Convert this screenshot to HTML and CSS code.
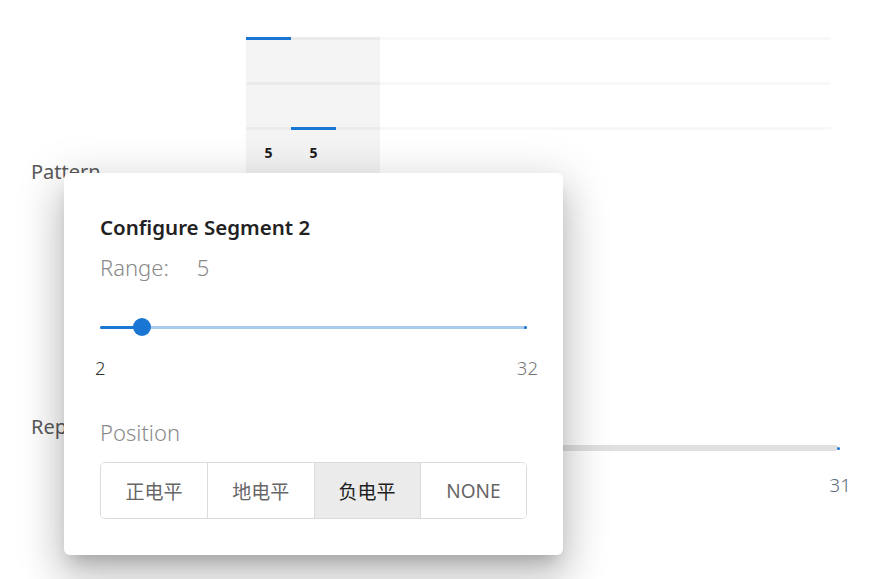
FILE: index.html
```html
<!DOCTYPE html>
<html lang="en">
<head>
<meta charset="utf-8">
<title>Configure Segment</title>
<link rel="stylesheet" href="styles.css">
</head>
<body>
<div class="page">
  <section class="pattern">
    <div class="row-label">Pattern</div>
    <div class="chart">
      <div class="track"><div class="seg" style="margin-left:0px"></div></div>
      <div class="track"></div>
      <div class="track"><div class="seg" style="margin-left:45px"></div></div>
      <div class="values"><span>5</span><span>5</span></div>
    </div>
  </section>
  <section class="repeat">
    <div class="row-label">Repeat</div>
    <div class="repeat-slider">
      <div class="bg-track"><span class="bg-dot"></span></div>
      <div class="bg-max">31</div>
    </div>
  </section>
</div>

<div class="dialog">
  <h2 class="title">Configure Segment 2</h2>
  <div class="range">Range:<span class="range-val">5</span></div>
  <div class="slider">
    <div class="slider-rail">
      <div class="slider-fill"></div>
      <div class="slider-thumb"></div>
      <span class="slider-end"></span>
    </div>
    <div class="slider-labels"><span class="min">2</span><span class="max">32</span></div>
  </div>
  <div class="section-label">Position</div>
  <div class="btn-group">
    <button class="btn">正电平</button>
    <button class="btn">地电平</button>
    <button class="btn active">负电平</button>
    <button class="btn">NONE</button>
  </div>
</div>
</body>
</html>
```

FILE: styles.css
```css
html, body {
  margin: 0;
  padding: 0;
  background: #ffffff;
}
body {
  width: 883px;
  height: 579px;
  overflow: hidden;
  position: relative;
  font-family: "Noto Sans", "Noto Sans CJK SC", sans-serif;
  color: #222;
}
.page {
  padding-top: 37px;
}
.pattern {
  display: grid;
  grid-template-columns: 246px 585px;
}
.row-label {
  padding-left: 31px;
  font-size: 20px;
  color: #5a5a5a;
  align-self: end;
  line-height: 24px;
}
.pattern .row-label {
  margin-bottom: -7px;
}
.chart {
  background: linear-gradient(to right, #f4f4f4 0, #f4f4f4 134px, transparent 134px);
  height: 140px;
}
.track {
  height: 3px;
  margin-bottom: 42px;
  background: linear-gradient(to right, #ebebeb 0, #ebebeb 134px, #f8f8f8 134px);
  display: flex;
}
.seg {
  width: 45px;
  height: 3px;
  background: #1976d2;
}
.values {
  display: flex;
  margin-top: -28px;
}
.values span {
  width: 45px;
  text-align: center;
  font-size: 14px;
  font-weight: 700;
  color: #1a1a1a;
  line-height: 18px;
}
.repeat {
  margin-top: 238px;
  display: grid;
  grid-template-columns: 246px 1fr;
}
.repeat .row-label {
  align-self: start;
}
.repeat-slider {
  padding-top: 30px;
  width: 600px;
  margin-left: -8px;
}
.bg-track {
  height: 6px;
  background: #e0e0e0;
  border-radius: 3px;
  position: relative;
}
.bg-dot {
  position: absolute;
  right: -2px;
  top: 2px;
  width: 3px;
  height: 3px;
  border-radius: 50%;
  background: #1976d2;
}
.bg-max {
  text-align: right;
  margin-right: -13px;
  margin-top: 21px;
  font-size: 19px;
  font-weight: 300;
  color: #5a6a78;
}

.dialog {
  position: absolute;
  left: 64px;
  top: 173px;
  width: 499px;
  height: 382px;
  box-sizing: border-box;
  background: #fff;
  border-radius: 6px;
  box-shadow: 0 11px 15px -7px rgba(0,0,0,0.2), 0 24px 38px 3px rgba(0,0,0,0.14), 0 9px 46px 8px rgba(0,0,0,0.12);
  padding: 40px 36px 0 36px;
}
.title {
  margin: 0;
  font-size: 20.5px;
  font-weight: 600;
  color: #222;
  line-height: 28px;
}
.range {
  margin-top: 11px;
  font-size: 22px;
  font-weight: 300;
  color: #8a8a8a;
  line-height: 30px;
}
.range-val {
  margin-left: 28px;
}
.slider {
  margin-top: 44px;
  width: 427px;
}
.slider-rail {
  position: relative;
  height: 3px;
  background: #a9cbf0;
  border-radius: 2px;
}
.slider-fill {
  width: 42px;
  height: 3px;
  background: #1976d2;
  border-radius: 2px;
}
.slider-thumb {
  position: absolute;
  left: 33px;
  top: -8px;
  width: 18px;
  height: 18px;
  border-radius: 50%;
  background: #1976d2;
}
.slider-end {
  position: absolute;
  right: 0;
  top: 0;
  width: 3px;
  height: 3px;
  border-radius: 50%;
  background: #1976d2;
}
.slider-labels {
  display: flex;
  justify-content: space-between;
  margin-top: 27px;
  font-size: 18.5px;
  font-weight: 300;
  line-height: 24px;
}
.slider-labels .min {
  color: #333;
  margin-left: -5px;
}
.slider-labels .max {
  color: #777;
  margin-right: -11px;
}
.section-label {
  margin-top: 37px;
  font-size: 22px;
  font-weight: 300;
  color: #8a8a8a;
  line-height: 30px;
}
.btn-group {
  margin-top: 15px;
  width: 427px;
  height: 57px;
  display: grid;
  grid-template-columns: repeat(4, 1fr);
  border: 1px solid #dcdcdc;
  border-radius: 5px;
  box-sizing: border-box;
  overflow: hidden;
}
.btn {
  border: 0;
  border-left: 1px solid #dcdcdc;
  background: #fff;
  font-family: "Noto Sans", "Noto Sans CJK SC", sans-serif;
  font-size: 19px;
  font-weight: 400;
  color: #666;
  padding: 0;
}
.btn:first-child {
  border-left: 0;
}
.btn.active {
  background: #ebebeb;
  color: #1e1e1e;
}
```
